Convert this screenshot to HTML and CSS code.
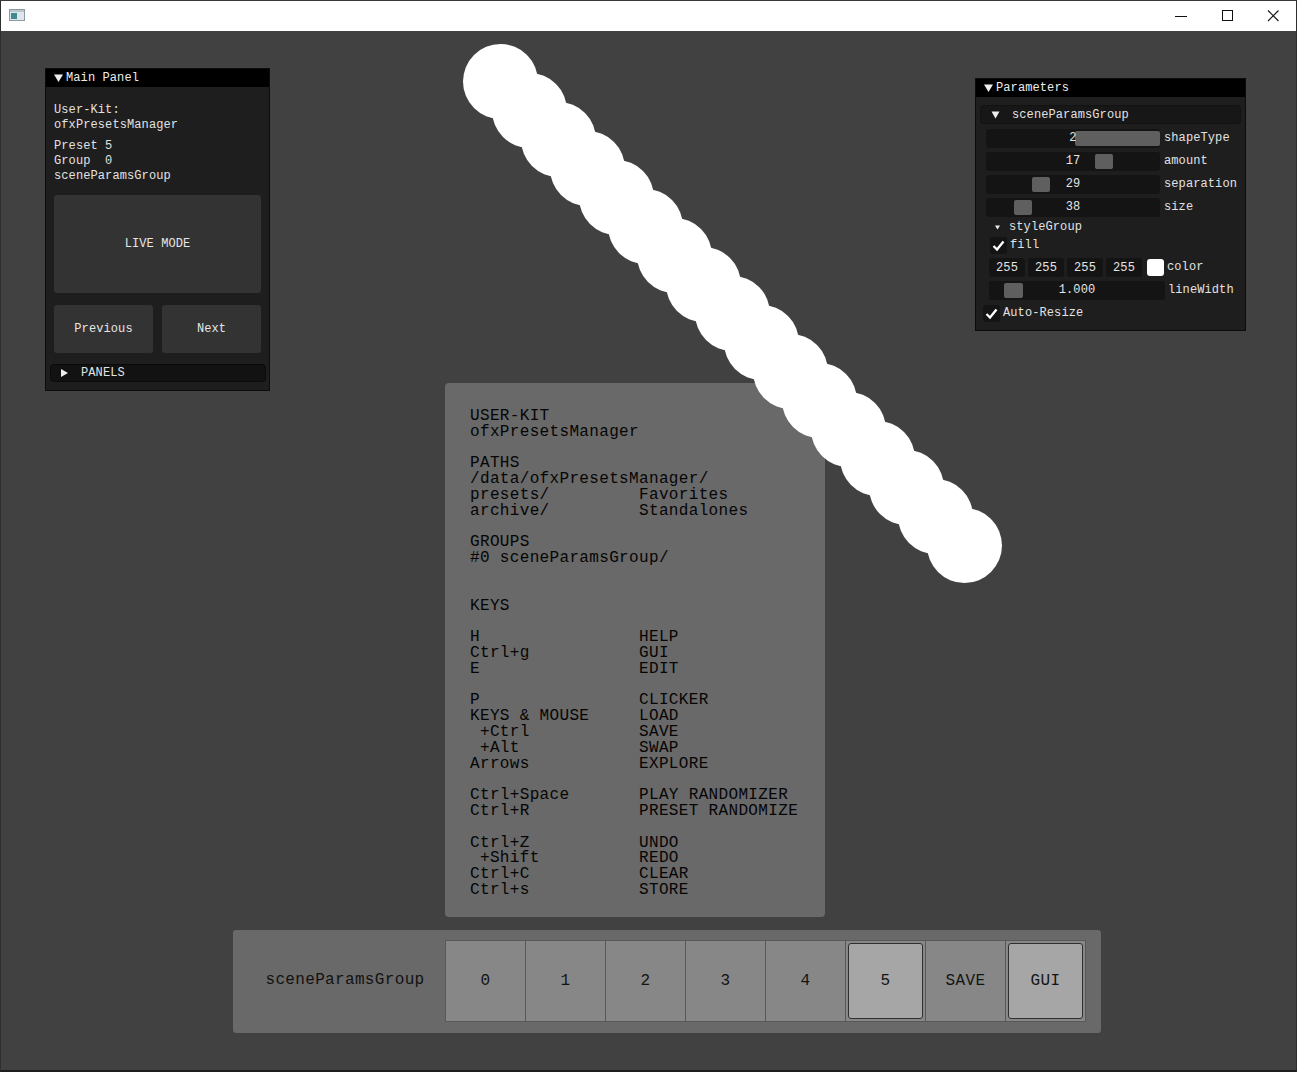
FILE: index.html
```html
<!DOCTYPE html>
<html>
<head>
<meta charset="utf-8">
<title>ofxPresetsManager</title>
<link rel="stylesheet" href="styles.css">
</head>
<body>
<div class="window">
  <header class="titlebar">
    <svg class="app-icon" width="16" height="12" viewBox="0 0 16 12">
      <rect x="0.5" y="0.5" width="15" height="11" fill="#dfe6ea" stroke="#8c9ba3"/>
      <rect x="1" y="1" width="14" height="2" fill="#b9c6cd"/>
      <rect x="2" y="4" width="6" height="6" fill="#3f8a91"/>
    </svg>
    <div class="controls">
      <span class="ctl"><svg width="12" height="12" viewBox="0 0 12 12"><line x1="0" y1="6.5" x2="12" y2="6.5" stroke="#111" stroke-width="1"/></svg></span>
      <span class="ctl"><svg width="12" height="12" viewBox="0 0 12 12"><rect x="1.5" y="0.5" width="10" height="10" fill="none" stroke="#111" stroke-width="1"/></svg></span>
      <span class="ctl"><svg width="12" height="12" viewBox="0 0 12 12"><path d="M1 0.5 L11.5 11 M11.5 0.5 L1 11" stroke="#111" stroke-width="1.1" fill="none"/></svg></span>
    </div>
  </header>

  <main class="canvas">
    <section class="panel main-panel">
      <div class="panel-title">
        <svg class="tri-down" width="9" height="8" viewBox="0 0 9 8"><polygon points="0,0.5 9,0.5 4.5,8" fill="#eee"/></svg>
        <span>Main Panel</span>
      </div>
      <div class="main-body">
        <div class="info">
          <div class="line">User-Kit:</div>
          <div class="line">ofxPresetsManager</div>
        </div>
        <div class="info gap">
          <div class="line">Preset 5</div>
          <div class="line">Group  0</div>
          <div class="line">sceneParamsGroup</div>
        </div>
        <div class="btn live-btn">LIVE MODE</div>
        <div class="nav-row">
          <div class="btn nav-btn">Previous</div>
          <div class="btn nav-btn">Next</div>
        </div>
        <div class="panels-header">
          <svg width="7" height="8" viewBox="0 0 7 8"><polygon points="0,0 7,4 0,8" fill="#eee"/></svg>
          <span>PANELS</span>
        </div>
      </div>
    </section>

    <section class="panel params-panel">
      <div class="panel-title">
        <svg class="tri-down" width="9" height="8" viewBox="0 0 9 8"><polygon points="0,0.5 9,0.5 4.5,8" fill="#eee"/></svg>
        <span>Parameters</span>
      </div>
      <div class="group-header">
        <svg width="9" height="8" viewBox="0 0 9 8"><polygon points="0.5,0.5 8.5,0.5 4.5,7.5" fill="#eee"/></svg>
        <span>sceneParamsGroup</span>
      </div>
      <div class="rows">
        <div class="row slider-row">
          <div class="slider"><span class="grab" style="left:89px;width:85px"></span><span class="val">2</span></div>
          <span class="lbl">shapeType</span>
        </div>
        <div class="row slider-row">
          <div class="slider"><span class="grab" style="left:109px;width:18px"></span><span class="val">17</span></div>
          <span class="lbl">amount</span>
        </div>
        <div class="row slider-row">
          <div class="slider"><span class="grab" style="left:46px;width:18px"></span><span class="val">29</span></div>
          <span class="lbl">separation</span>
        </div>
        <div class="row slider-row">
          <div class="slider"><span class="grab" style="left:28px;width:18px"></span><span class="val">38</span></div>
          <span class="lbl">size</span>
        </div>
        <div class="subgroup">
          <svg width="5" height="5" viewBox="0 0 5 5"><polygon points="0,0.5 5,0.5 2.5,4.5" fill="#eee"/></svg>
          <span>styleGroup</span>
        </div>
        <div class="row check-row fill-row">
          <span class="checkbox"><svg width="17" height="17" viewBox="0 0 17 17"><path d="M3.5 9 L7 12.5 L13.5 4.5" fill="none" stroke="#fff" stroke-width="2.3"/></svg></span>
          <span class="lbl">fill</span>
        </div>
        <div class="row color-row">
          <span class="field">255</span>
          <span class="field">255</span>
          <span class="field">255</span>
          <span class="field">255</span>
          <span class="swatch"></span>
          <span class="lbl">color</span>
        </div>
        <div class="row lw-row">
          <div class="slider wide"><span class="grab" style="left:15px;width:19px"></span><span class="val">1.000</span></div>
          <span class="lbl">lineWidth</span>
        </div>
        <div class="row check-row auto-row">
          <span class="checkbox"><svg width="17" height="17" viewBox="0 0 17 17"><path d="M3.5 9 L7 12.5 L13.5 4.5" fill="none" stroke="#fff" stroke-width="2.3"/></svg></span>
          <span class="lbl">Auto-Resize</span>
        </div>
      </div>
    </section>

    <div class="help"><pre>USER-KIT
ofxPresetsManager

PATHS
/data/ofxPresetsManager/
presets/         Favorites
archive/         Standalones

GROUPS
#0 sceneParamsGroup/


KEYS

H                HELP
Ctrl+g           GUI
E                EDIT

P                CLICKER
KEYS &amp; MOUSE     LOAD
 +Ctrl           SAVE
 +Alt            SWAP
Arrows           EXPLORE

Ctrl+Space       PLAY RANDOMIZER
Ctrl+R           PRESET RANDOMIZE

Ctrl+Z           UNDO
 +Shift          REDO
Ctrl+C           CLEAR
Ctrl+s           STORE</pre></div>

    <div class="circles">
      <span class="circle" style="left:461.5px;top:12.5px"></span>
      <span class="circle" style="left:490.5px;top:41.5px"></span>
      <span class="circle" style="left:519.5px;top:70.5px"></span>
      <span class="circle" style="left:548.5px;top:99.5px"></span>
      <span class="circle" style="left:577.5px;top:128.5px"></span>
      <span class="circle" style="left:606.5px;top:157.5px"></span>
      <span class="circle" style="left:635.5px;top:186.5px"></span>
      <span class="circle" style="left:664.5px;top:215.5px"></span>
      <span class="circle" style="left:693.5px;top:244.5px"></span>
      <span class="circle" style="left:722.5px;top:273.5px"></span>
      <span class="circle" style="left:751.5px;top:302.5px"></span>
      <span class="circle" style="left:780.5px;top:331.5px"></span>
      <span class="circle" style="left:809.5px;top:360.5px"></span>
      <span class="circle" style="left:838.5px;top:389.5px"></span>
      <span class="circle" style="left:867.5px;top:418.5px"></span>
      <span class="circle" style="left:896.5px;top:447.5px"></span>
      <span class="circle" style="left:925.5px;top:476.5px"></span>
    </div>

    <div class="preset-bar">
      <div class="bar-label">sceneParamsGroup</div>
      <div class="cells">
        <div class="cell">0</div>
        <div class="cell">1</div>
        <div class="cell">2</div>
        <div class="cell">3</div>
        <div class="cell">4</div>
        <div class="cell selected"><span class="inner">5</span></div>
        <div class="cell">SAVE</div>
        <div class="cell selected"><span class="inner">GUI</span></div>
      </div>
    </div>
  </main>
</div>
</body>
</html>
```

FILE: styles.css
```css
* { box-sizing: border-box; }

html, body {
  margin: 0;
  padding: 0;
  width: 1297px;
  height: 1072px;
  overflow: hidden;
  background: #414141;
}

.window {
  width: 1297px;
  height: 1072px;
  display: flex;
  flex-direction: column;
  border: 1px solid #2e2e2e;
  border-top-color: #3a3a3a;
  border-bottom: 2px solid #1e1e1e;
}

.titlebar {
  height: 30px;
  flex: none;
  background: #ffffff;
  display: flex;
  align-items: center;
  justify-content: space-between;
}

.app-icon {
  margin-left: 8px;
  margin-top: -2px;
}

.controls {
  display: flex;
  height: 100%;
}

.ctl {
  width: 46px;
  height: 100%;
  display: flex;
  align-items: center;
  justify-content: center;
}

.canvas {
  flex: 1;
  position: relative;
  background: #414141;
  font-family: "Liberation Mono", "DejaVu Sans Mono", monospace;
  overflow: hidden;
}

/* floating ImGui windows */
.panel {
  position: absolute;
  background: #1e1e1e;
  border: 1px solid #0c0c0c;
  color: #e2e2e2;
  font-size: 12px;
  letter-spacing: 0.1px;
}

.panel-title {
  height: 18px;
  background: #000000;
  display: flex;
  align-items: center;
  padding-left: 8px;
  gap: 3px;
  color: #ececec;
  line-height: 18px;
}

.main-panel {
  left: 44px;
  top: 37px;
  width: 225px;
}

.main-body {
  padding: 16px 8px 8px 8px;
}

.info .line {
  line-height: 15px;
  height: 15px;
  white-space: pre;
}

.info.gap { margin-top: 6px; }

.btn {
  background: #333333;
  border-radius: 3px;
  display: flex;
  align-items: center;
  justify-content: center;
  color: #e6e6e6;
}

.live-btn {
  margin-top: 11px;
  height: 98px;
}

.nav-row {
  margin-top: 12px;
  display: flex;
  gap: 9px;
}

.nav-btn {
  flex: 1;
  height: 48px;
}

.panels-header {
  margin: 11px -5px 0 -4px;
  height: 18px;
  background: #121212;
  border: 1px solid #0a0a0a;
  border-radius: 4px;
  display: flex;
  align-items: center;
  padding-left: 10px;
  gap: 13px;
}

/* parameters */
.params-panel {
  left: 974px;
  top: 47px;
  width: 271px;
  padding-bottom: 8px;
}

.params-panel .panel-title { padding-left: 8px; }

.group-header {
  margin: 8px 4px 0 4px;
  height: 19px;
  background: #171717;
  border: 1px solid #121212;
  border-radius: 4px;
  display: flex;
  align-items: center;
  padding-left: 10px;
  gap: 12px;
}

.rows {
  padding-left: 10px;
  margin-top: 5px;
}

.row {
  display: flex;
  align-items: center;
}

.slider-row + .slider-row { margin-top: 4px; }

.slider {
  position: relative;
  width: 174px;
  height: 19px;
  background: #141414;
  border-radius: 3px;
  display: flex;
  align-items: center;
  justify-content: center;
}

.slider.wide { width: 176px; }

.grab {
  position: absolute;
  top: 2px;
  height: 15px;
  background: #5f5f5f;
  border-radius: 2px;
}

.val {
  position: relative;
  color: #e4e4e4;
  line-height: 15px;
}

.lbl {
  margin-left: 4px;
  line-height: 15px;
}

.subgroup {
  margin-top: 2px;
  height: 16px;
  display: flex;
  align-items: center;
  padding-left: 9px;
  gap: 9px;
}

.check-row .checkbox {
  width: 17px;
  height: 17px;
  background: #141414;
  border-radius: 3px;
  display: flex;
}

.check-row .lbl { margin-left: 3px; }

.fill-row {
  margin-top: 2px;
  padding-left: 4px;
}

.color-row {
  margin-top: 4px;
  padding-left: 3px;
  gap: 3px;
}

.field {
  width: 36px;
  height: 19px;
  background: #141414;
  border-radius: 3px;
  display: flex;
  align-items: center;
  justify-content: center;
  color: #e4e4e4;
}

.swatch {
  width: 17px;
  height: 17px;
  margin-left: 2px;
  background: #ffffff;
  border-radius: 3px;
}

.color-row .lbl { margin-left: 0; }

.lw-row {
  margin-top: 4px;
  padding-left: 3px;
}

.lw-row .lbl { margin-left: 3px; }

.auto-row {
  margin-top: 5px;
  margin-left: -3px;
}

/* help overlay */
.help {
  position: absolute;
  left: 444px;
  top: 352px;
  width: 380px;
  height: 534px;
  background: #696969;
  border-radius: 4px;
  padding: 26px 0 0 25px;
}

.help pre {
  margin: 0;
  font-family: "Liberation Mono", "DejaVu Sans Mono", monospace;
  font-size: 16px;
  letter-spacing: 0.34px;
  line-height: 15.8px;
  color: #050505;
}

/* drawn scene */
.circles {
  position: absolute;
  inset: 0;
  pointer-events: none;
}

.circle {
  position: absolute;
  width: 75px;
  height: 75px;
  border-radius: 50%;
  background: #ffffff;
}

/* preset clicker */
.preset-bar {
  position: absolute;
  left: 232px;
  top: 899px;
  width: 868px;
  height: 103px;
  background: #696969;
  border-radius: 3px;
  display: flex;
  align-items: center;
}

.bar-label {
  width: 212px;
  text-align: center;
  font-size: 16px;
  letter-spacing: 0.34px;
  color: #121212;
  padding-left: 12px;
  margin-top: -4px;
}

.cells {
  display: flex;
  border: 1px solid #585858;
  margin-top: -1px;
}

.cell {
  width: 80px;
  height: 80px;
  background: #878787;
  border-right: 1px solid #585858;
  display: flex;
  align-items: center;
  justify-content: center;
  font-size: 16px;
  letter-spacing: 0.34px;
  color: #141414;
}

.cell:last-child { border-right: none; width: 79px; }

.cell.selected { padding: 2px; }

.cell .inner {
  width: 100%;
  height: 100%;
  background: #a6a6a6;
  border: 1px solid #2f2f2f;
  border-radius: 3px;
  display: flex;
  align-items: center;
  justify-content: center;
}
```
